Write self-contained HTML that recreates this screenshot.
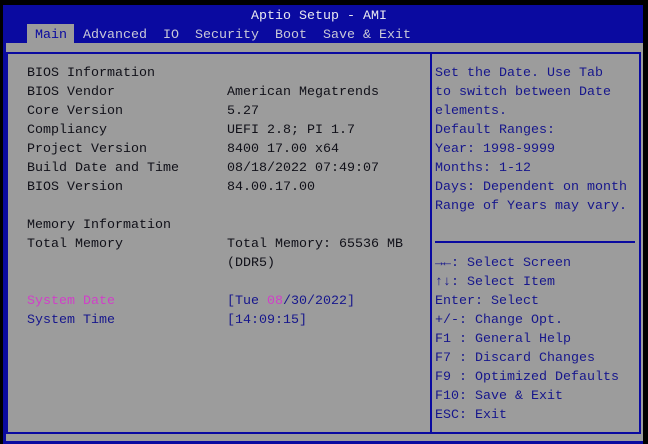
<!DOCTYPE html>
<html><head><style>
*{margin:0;padding:0}
body{width:648px;height:444px;background:#000;position:relative;overflow:hidden;font-family:"Liberation Mono","DejaVu Sans Mono",monospace;font-size:13.33px}
.a{position:absolute;white-space:pre;line-height:19px}
.bl{color:#16168c}
.dk{color:#101018}
.pk{color:#d040c8}
.tab{color:#c8c8d8}
</style></head><body>
<div style="position:absolute;left:3px;top:5px;width:640px;height:439px;background:#9c9c9c"></div>
<div style="position:absolute;left:3px;top:5px;width:640px;height:38px;background:#0a0aa0"></div>
<div style="position:absolute;left:3px;top:5px;width:3px;height:439px;background:#0a0aa0"></div>
<div style="position:absolute;left:3px;top:441px;width:640px;height:3px;background:#0a0aa0"></div>
<div style="position:absolute;left:27px;top:24px;width:47px;height:19px;background:#9c9c9c"></div>
<div style="position:absolute;left:6px;top:52px;width:631px;height:378px;border:2px solid #0a0aa0"></div>
<div style="position:absolute;left:430px;top:52px;width:2px;height:380px;background:#0a0aa0"></div>
<div style="position:absolute;left:435px;top:241px;width:200px;height:2px;background:#0a0aa0"></div>
<div class="a" style="left:251px;top:7px;color:#e8e8f0">Aptio Setup - AMI</div>
<div class="a tab" style="left:35px;top:26px;color:#0a0aa0">Main</div>
<div class="a tab" style="left:83px;top:26px">Advanced</div>
<div class="a tab" style="left:163px;top:26px">IO</div>
<div class="a tab" style="left:195px;top:26px">Security</div>
<div class="a tab" style="left:275px;top:26px">Boot</div>
<div class="a tab" style="left:323px;top:26px">Save &amp; Exit</div>
<div class="a dk" style="left:27px;top:64px">BIOS Information
BIOS Vendor
Core Version
Compliancy
Project Version
Build Date and Time
BIOS Version

Memory Information
Total Memory</div>
<div class="a dk" style="left:227px;top:83px">American Megatrends
5.27
UEFI 2.8; PI 1.7
8400 17.00 x64
08/18/2022 07:49:07
84.00.17.00


Total Memory: 65536 MB
(DDR5)</div>
<div class="a pk" style="left:27px;top:292px">System Date</div>
<div class="a bl" style="left:27px;top:311px">System Time</div>
<div class="a bl" style="left:227px;top:292px">[Tue <span class="pk">08</span>/30/2022]
[14:09:15]</div>
<div class="a bl" style="left:435px;top:64px">Set the Date. Use Tab
to switch between Date
elements.
Default Ranges:
Year: 1998-9999
Months: 1-12
Days: Dependent on month
Range of Years may vary.</div>
<div class="a bl" style="left:435px;top:254px"><b>→←</b>: Select Screen
<b>↑↓</b>: Select Item
Enter: Select
+/-: Change Opt.
F1 : General Help
F7 : Discard Changes
F9 : Optimized Defaults
F10: Save &amp; Exit
ESC: Exit</div>
</body></html>
